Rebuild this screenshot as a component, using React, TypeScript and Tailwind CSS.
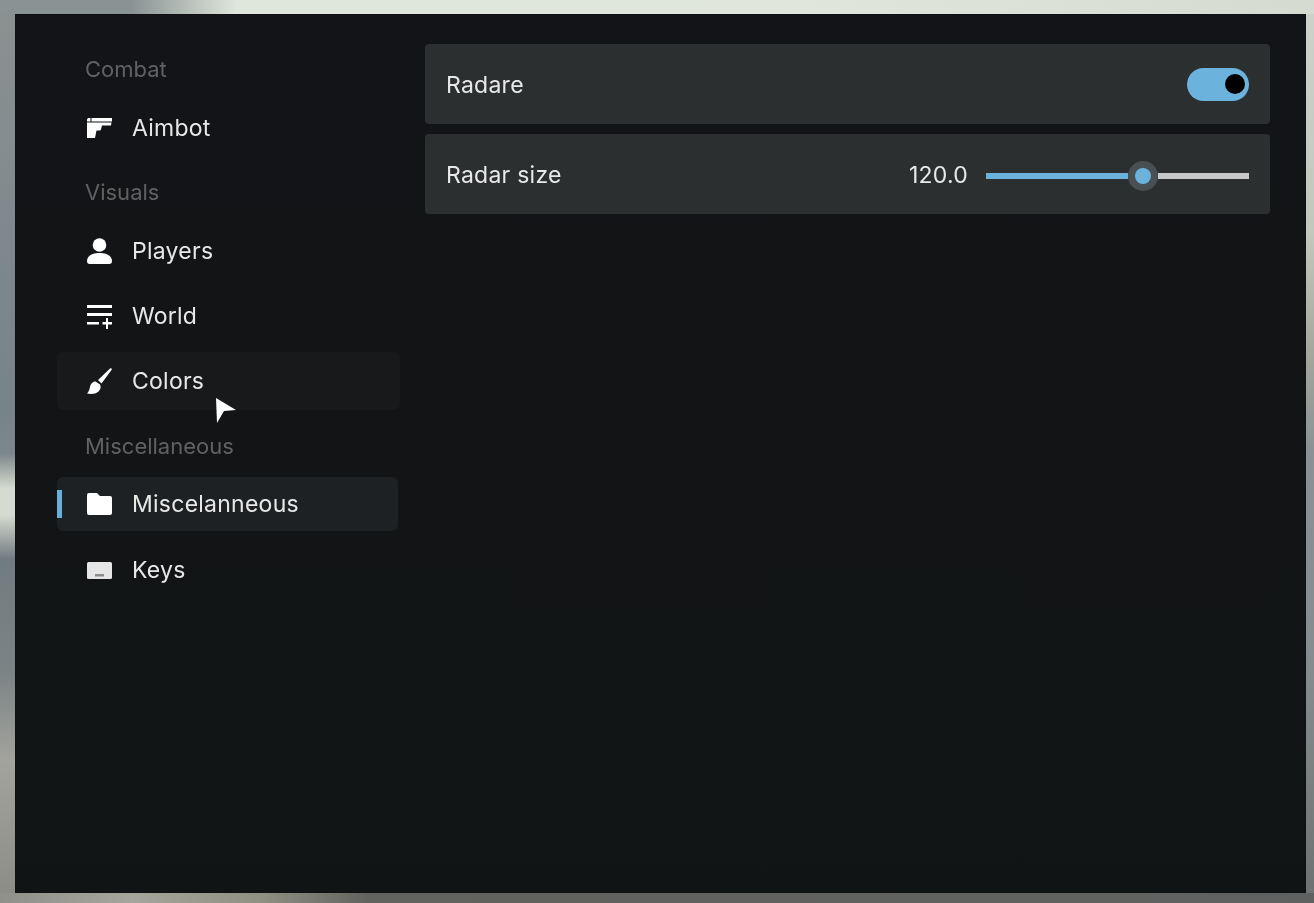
import { ReactNode } from "react";

const GunIcon = () => (
  <svg width="25" height="20" viewBox="0 0 25 20" fill="white">
    <path d="M0 1.500 1 0h2.500v3.500H0zM4.500 0H25v3.500H4.500z" />
    <path d="M0 4.500h24.500L24 7.500H15l-1 4c-.3.800-1 1-1.800 1H9.500L8 20H0z" />
  </svg>
);

const PersonIcon = () => (
  <svg width="25" height="26" viewBox="0 0 25 26" fill="white">
    <circle cx="12.500" cy="7" r="6.800" />
    <path d="M0 23c0-6 7-8 12.500-8S25 17 25 23c0 2-1 3-2.500 3h-20C1 26 0 25 0 23z" />
  </svg>
);

const WorldIcon = () => (
  <svg width="25" height="25" viewBox="0 0 25 25" fill="white">
    <rect x="0" y="1" width="25" height="3" />
    <rect x="0" y="9" width="25" height="3" />
    <rect x="0" y="18" width="12" height="2.500" />
    <path d="M19 14h2v4h4v2.500h-4V25h-2v-4.500h-3.500V18H19z" />
  </svg>
);

const BrushIcon = () => (
  <svg width="25" height="26" viewBox="0 0 25 26" fill="white">
    <path d="M24.500.5c.5.5.5 1 0 1.500L14.500 15.500 11 12 23 .5c.5-.4 1-.4 1.500 0z" />
    <path d="M8.500 13.500c-3 0-5 2.500-5.500 5.500-.5 3-1.500 5-3 6.500 4 1 9 .5 11.500-2 2.500-2.500 2.500-5 1.500-7z" />
  </svg>
);

const FolderIcon = () => (
  <svg width="25" height="22" viewBox="0 0 25 22" fill="white">
    <path d="M2 0h8l3 3h10a2 2 0 0 1 2 2v15a2 2 0 0 1-2 2H2a2 2 0 0 1-2-2V2a2 2 0 0 1 2-2z" />
  </svg>
);

const KeyboardIcon = () => (
  <svg width="25" height="17" viewBox="0 0 25 17">
    <rect width="25" height="17" rx="1.500" fill="#e6e6e6" />
    <rect x="8" y="12" width="9" height="2.500" fill="#8a8c8c" />
  </svg>
);

function SectionLabel({ children, className }: { children: ReactNode; className: string }) {
  return <p className={"pl-[69px] text-[22px] leading-[22px] text-[#5f6163] " + className}>{children}</p>;
}

function NavItem({ icon, label, hover, active }: { icon: ReactNode; label: string; hover?: boolean; active?: boolean }) {
  let rowClass = "mr-[25px] h-[58px]";
  if (active) rowClass = "mr-[27px] h-[54px] bg-[#1e2123]";
  if (hover) rowClass = "mr-[25px] h-[58px] bg-[#17191b]";
  return (
    <div className={"relative ml-[41px] flex items-center gap-[20px] rounded-md pl-[30px] " + rowClass}>
      {active && <span className="absolute left-0 top-[13px] h-[28px] w-[5px] bg-[#67aedb]" />}
      <span className="flex w-[25px] items-center justify-center">{icon}</span>
      <span className="pt-[1px] text-[23px] leading-none tracking-[0.25px] text-[#e8e8e8]">{label}</span>
    </div>
  );
}

export default function App() {
  return (
    <div className="flex h-[903px] w-[1314px] flex-col overflow-hidden font-['Inter',sans-serif] blur-[0.5px]">
      <div className="h-[14px] bg-[linear-gradient(to_right,#8a9393_0%,#8a9393_10%,#dfe6dc_18%,#e0e6dc_60%,#d5dbd0_100%)]" />
      <div className="flex h-[879px]">
        <div className="w-[15px] bg-[linear-gradient(to_bottom,#8a9191_0%,#76838a_45%,#7b878a_50%,#d5dbd0_54%,#d5dbd0_57%,#717c80_62%,#7b8485_75%,#a3a39d_85%,#8d8d87_100%)]" />
        <div className="relative flex w-[1291px] border border-[#0e1011] bg-[linear-gradient(to_bottom,#131417,#111414)]">
          <aside className="w-[409px] shrink-0 pt-[43px]">
            <SectionLabel className="">Combat</SectionLabel>
            <div className="mt-[19px]">
              <NavItem icon={<GunIcon />} label="Aimbot" />
            </div>
            <SectionLabel className="mt-[24px]">Visuals</SectionLabel>
            <div className="mt-[19px] flex flex-col gap-[7px]">
              <NavItem icon={<PersonIcon />} label="Players" />
              <NavItem icon={<WorldIcon />} label="World" />
              <NavItem icon={<BrushIcon />} label="Colors" hover />
            </div>
            <SectionLabel className="mt-[25px]">Miscellaneous</SectionLabel>
            <div className="mt-[20px] flex flex-col gap-[10px]">
              <NavItem icon={<FolderIcon />} label="Miscelanneous" active />
              <NavItem icon={<KeyboardIcon />} label="Keys" />
            </div>
          </aside>
          <main className="flex flex-1 flex-col gap-[10px] pr-[35px] pt-[29px]">
            <div className="flex h-[80px] items-center justify-between rounded-[4px] bg-[#2c2f30] px-[21px]">
              <span className="pt-[2px] text-[23px] tracking-[0.25px] text-[#e8e8e8]">Radare</span>
              <span className="flex h-[33px] w-[62px] items-center justify-end rounded-full bg-[#6bb2dd] pr-[4px]">
                <span className="h-[20px] w-[20px] rounded-full bg-black" />
              </span>
            </div>
            <div className="flex h-[80px] items-center rounded-[4px] bg-[#2c2f30] px-[21px]">
              <span className="pt-[2px] text-[23px] tracking-[0.25px] text-[#e8e8e8]">Radar size</span>
              <span className="ml-auto mr-[18px] pt-[2px] text-[23px] tracking-[0.25px] text-[#e8e8e8]">120.0</span>
              <div className="flex w-[263px] items-center pt-[3px]">
                <span className="h-[6px] w-[142px] bg-[#6bb2dd]" />
                <span className="flex h-[30px] w-[30px] shrink-0 items-center justify-center rounded-full bg-[#495053]">
                  <span className="h-[16px] w-[16px] rounded-full bg-[#6bb2dd]" />
                </span>
                <span className="h-[6px] flex-1 bg-[#c8c8c8]" />
              </div>
            </div>
          </main>
          {/* mouse pointer on top of the Colors row */}
          <svg className="absolute left-[199px] top-[382px]" width="22" height="27" viewBox="0 0 22 27" fill="white">
            <path d="M1 1 21 13 9 14 2 26z" />
          </svg>
        </div>
        <div className="w-[8px] bg-[linear-gradient(to_bottom,#ccd2ca_0%,#c3c8bf_25%,#a5a89f_38%,#8b9194_50%,#868c8e_75%,#6e7272_100%)]" />
      </div>
      <div className="h-[10px] bg-[linear-gradient(to_right,#8f908b_0%,#a5a59b_10%,#8f8f82_20%,#62635f_28%,#5f6160_100%)]" />
    </div>
  );
}
